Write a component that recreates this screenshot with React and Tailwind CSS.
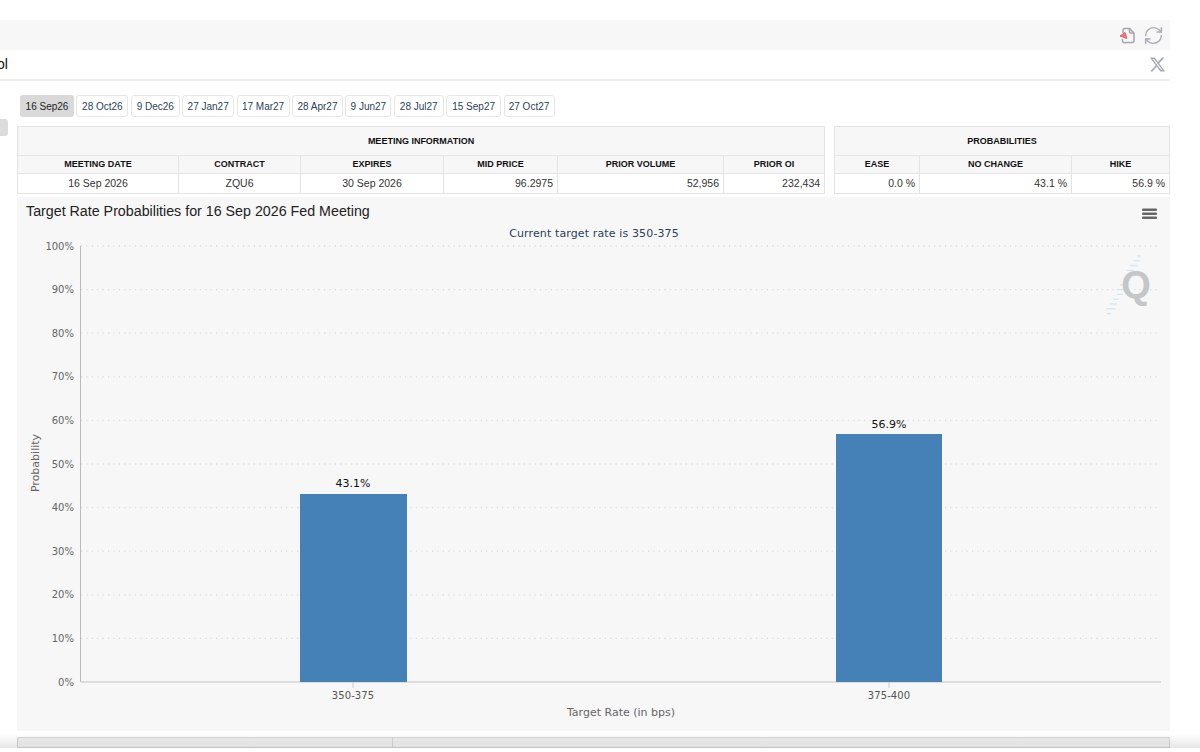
import React from 'react';
import { RefreshCw } from 'lucide-react';

const tabs = [
  { label: '16 Sep26', width: 'w-[54px]', active: true },
  { label: '28 Oct26', width: 'w-[52px]' },
  { label: '9 Dec26', width: 'w-[49px]' },
  { label: '27 Jan27', width: 'w-[52px]' },
  { label: '17 Mar27', width: 'w-[53px]' },
  { label: '28 Apr27', width: 'w-[51px]' },
  { label: '9 Jun27', width: 'w-[46px]' },
  { label: '28 Jul27', width: 'w-[50px]' },
  { label: '15 Sep27', width: 'w-[55px]' },
  { label: '27 Oct27', width: 'w-[51px]' },
];

const meetingCols = [
  { head: 'MEETING DATE', value: '16 Sep 2026', width: 'w-[161px]', align: 'text-center' },
  { head: 'CONTRACT', value: 'ZQU6', width: 'w-[122px]', align: 'text-center' },
  { head: 'EXPIRES', value: '30 Sep 2026', width: 'w-[143px]', align: 'text-center' },
  { head: 'MID PRICE', value: '96.2975', width: 'w-[114px]', align: 'text-right' },
  { head: 'PRIOR VOLUME', value: '52,956', width: 'w-[166px]', align: 'text-right' },
  { head: 'PRIOR OI', value: '232,434', width: 'w-[101px]', align: 'text-right' },
];

const probCols = [
  { head: 'EASE', value: '0.0 %', width: 'w-[85px]', align: 'text-right' },
  { head: 'NO CHANGE', value: '43.1 %', width: 'w-[152px]', align: 'text-right' },
  { head: 'HIKE', value: '56.9 %', width: 'w-[98px]', align: 'text-right' },
];

const ticks = [100, 90, 80, 70, 60, 50, 40, 30, 20, 10, 0];
const tickY = (pct) => 682 - pct * 4.36;

const InfoTable = ({ title, cols, className }) => (
  <table className={`table-fixed border-collapse border border-[#e4e4e4] text-[9px] text-[#111] ${className}`}>
    <colgroup>
      {cols.map((col) => (
        <col key={col.head} className={col.width} />
      ))}
    </colgroup>
    <thead>
      <tr className="bg-[#f7f7f7] h-[29px]">
        <th colSpan={cols.length} className="border border-[#e4e4e4] font-bold pt-[2px]">{title}</th>
      </tr>
      <tr className="bg-[#f7f7f7] h-[18px]">
        {cols.map((col) => (
          <th key={col.head} className="border border-[#e4e4e4] font-bold p-0">{col.head}</th>
        ))}
      </tr>
    </thead>
    <tbody>
      <tr className="h-[20px] text-[10.5px] text-[#333]">
        {cols.map((col) => (
          <td key={col.head} className={`border border-[#e4e4e4] px-1 pt-[1px] pb-0 ${col.align}`}>{col.value}</td>
        ))}
      </tr>
    </tbody>
  </table>
);

const Chart = () => (
  <svg width="1153" height="534" viewBox="17 197 1153 534" className="block" style={{ fontFamily: '"DejaVu Sans", sans-serif' }}>
    <text x="594" y="236.500" textAnchor="middle" fontSize="11" letterSpacing="0.13" fill="#2b3f5c">Current target rate is 350-375</text>

    {/* menu button */}
    <g fill="#666">
      <rect x="1142" y="208.500" width="15" height="2.500" rx="1" />
      <rect x="1142" y="212.500" width="15" height="2.500" rx="1" />
      <rect x="1142" y="216.500" width="15" height="2.500" rx="1" />
    </g>

    {/* grid */}
    {ticks.map((t) => (
      <g key={t}>
        {t > 0 && <line x1="81" x2="1161" y1={tickY(t)} y2={tickY(t)} stroke="#dadada" strokeWidth="1.300" strokeDasharray="1.200 4.200" />}
        <text x="74" y={tickY(t) + 3.5} textAnchor="end" fontSize="10" fill="#666">{t}%</text>
      </g>
    ))}

    {/* Q watermark */}
    <g stroke="#d6e6f0" strokeWidth="1.400">
      {[...Array(13)].map((_, i) => (
        <line key={i} x1={1137 - i * 2.5 - (i % 4)} x2={1141 - i * 2.5 + (i % 3)} y1={256 + i * 4.8} y2={256 + i * 4.8} />
      ))}
    </g>
    <text x="1136" y="298" textAnchor="middle" fontSize="38" fontWeight="700" fill="#c4c6c8" style={{ fontFamily: '"Liberation Sans", sans-serif' }}>Q</text>

    {/* axes */}
    <line x1="80.500" x2="80.500" y1="246" y2="682" stroke="#bbb" />
    <line x1="81" x2="1161" y1="682" y2="682" stroke="#c4c4c4" strokeWidth="1.200" />
    <line x1="353" x2="353" y1="682" y2="688" stroke="#ccc" />
    <line x1="889" x2="889" y1="682" y2="688" stroke="#ccc" />

    {/* bars */}
    <rect x="300" y="494" width="107" height="188" fill="#4580b7" />
    <rect x="836" y="434" width="106" height="248" fill="#4580b7" />
    <text x="353" y="487" textAnchor="middle" fontSize="11" fill="#111">43.1%</text>
    <text x="889" y="428" textAnchor="middle" fontSize="11" fill="#111">56.9%</text>

    <text x="353" y="699" textAnchor="middle" fontSize="10" letterSpacing="0.1" fill="#555">350-375</text>
    <text x="889" y="699" textAnchor="middle" fontSize="10" letterSpacing="0.1" fill="#555">375-400</text>
    <text x="621" y="716" textAnchor="middle" fontSize="11" fill="#666">Target Rate (in bps)</text>
    <text transform="translate(39 463) rotate(-90)" textAnchor="middle" fontSize="11" fill="#666">Probability</text>
  </svg>
);

export default function App() {
  return (
    <div className="relative w-[1200px] h-[752px] overflow-hidden bg-white pt-5" style={{ fontFamily: '"Liberation Sans", Arial, sans-serif' }}>
      <div className="w-[1170px]">
        <div className="h-[30px] bg-[#f7f7f7] flex items-center justify-end gap-[7px] pr-[6px]">
          <svg width="17" height="17" viewBox="0 0 17 17" fill="none">
            <path d="M4 6V3a1.500 1.500 0 0 1 1.500-1.500h5l4.500 4.500v8a1.500 1.500 0 0 1-1.500 1.500h-7A2 2 0 0 1 3.500 13.500V12" stroke="#a4a6af" strokeWidth="1.500" />
            <path d="M10.500 1.500V5a1 1 0 0 0 1 1H15" stroke="#a4a6af" strokeWidth="1.500" />
            <path d="M1 9 6 5.500 8 11.500z" fill="#ec7a83" stroke="#e4606b" strokeWidth="1" strokeLinejoin="round" />
          </svg>
          <RefreshCw size={21} strokeWidth={1.6} className="text-[#a9acb6]" />
        </div>
        <div className="h-[31px] border-b-2 border-[#eeeeee] flex items-center justify-between pr-1">
          <span className="-ml-[3px] text-[14px] text-[#111]">ol</span>
          <svg width="17" height="17" viewBox="0 0 24 24" fill="#a5a9b5">
            <path d="M18.244 2.25h3.308l-7.227 8.26 8.502 11.24H16.17l-5.214-6.817L4.99 21.75H1.68l7.73-8.835L1.254 2.25H8.08l4.713 6.231zm-1.161 17.52h1.833L7.084 4.126H5.117z" />
          </svg>
        </div>
        <div className="flex">
          <div className="w-[17px] shrink-0 pt-[38px]">
            <div className="w-2 h-[17px] bg-[#dcdcdc] rounded-r-[3px]"></div>
          </div>
          <div className="w-[1153px]">
            <div className="flex gap-[2.4px] pt-[14px] pl-[3px] h-[45px]">
              {tabs.map((tab) => (
                <div
                  key={tab.label}
                  className={`${tab.width} h-[22px] flex items-center justify-center rounded-[3px] text-[10px] ${tab.active ? 'bg-[#d9d9d9] text-[#222]' : 'bg-white border border-[#e6e6e6] text-[#2b3f5c]'}`}
                >
                  {tab.label}
                </div>
              ))}
            </div>
            <div className="flex justify-between items-start">
              <InfoTable title="MEETING INFORMATION" cols={meetingCols} className="w-[807px]" />
              <InfoTable title="PROBABILITIES" cols={probCols} className="w-[335px]" />
            </div>
            <div className="mt-[3px] h-[534px] bg-[#f7f7f7] relative">
              <div className="absolute left-[9px] top-[4px] text-[14.25px] text-[#222]">
                Target Rate Probabilities for 16 Sep 2026 Fed Meeting
              </div>
              <Chart />
            </div>
            <div className="mt-[6px] h-[11px] flex border border-[#d8d8d8] bg-gradient-to-b from-[#eeeeee] to-[#f8f8f8]">
              <div className="w-[375px] border-r border-[#d8d8d8]"></div>
            </div>
          </div>
        </div>
      </div>
      {/* window shadow along the bottom */}
      <div className="absolute left-0 right-0 top-[734px] h-[14px] bg-gradient-to-b from-transparent to-black/10"></div>
    </div>
  );
}
